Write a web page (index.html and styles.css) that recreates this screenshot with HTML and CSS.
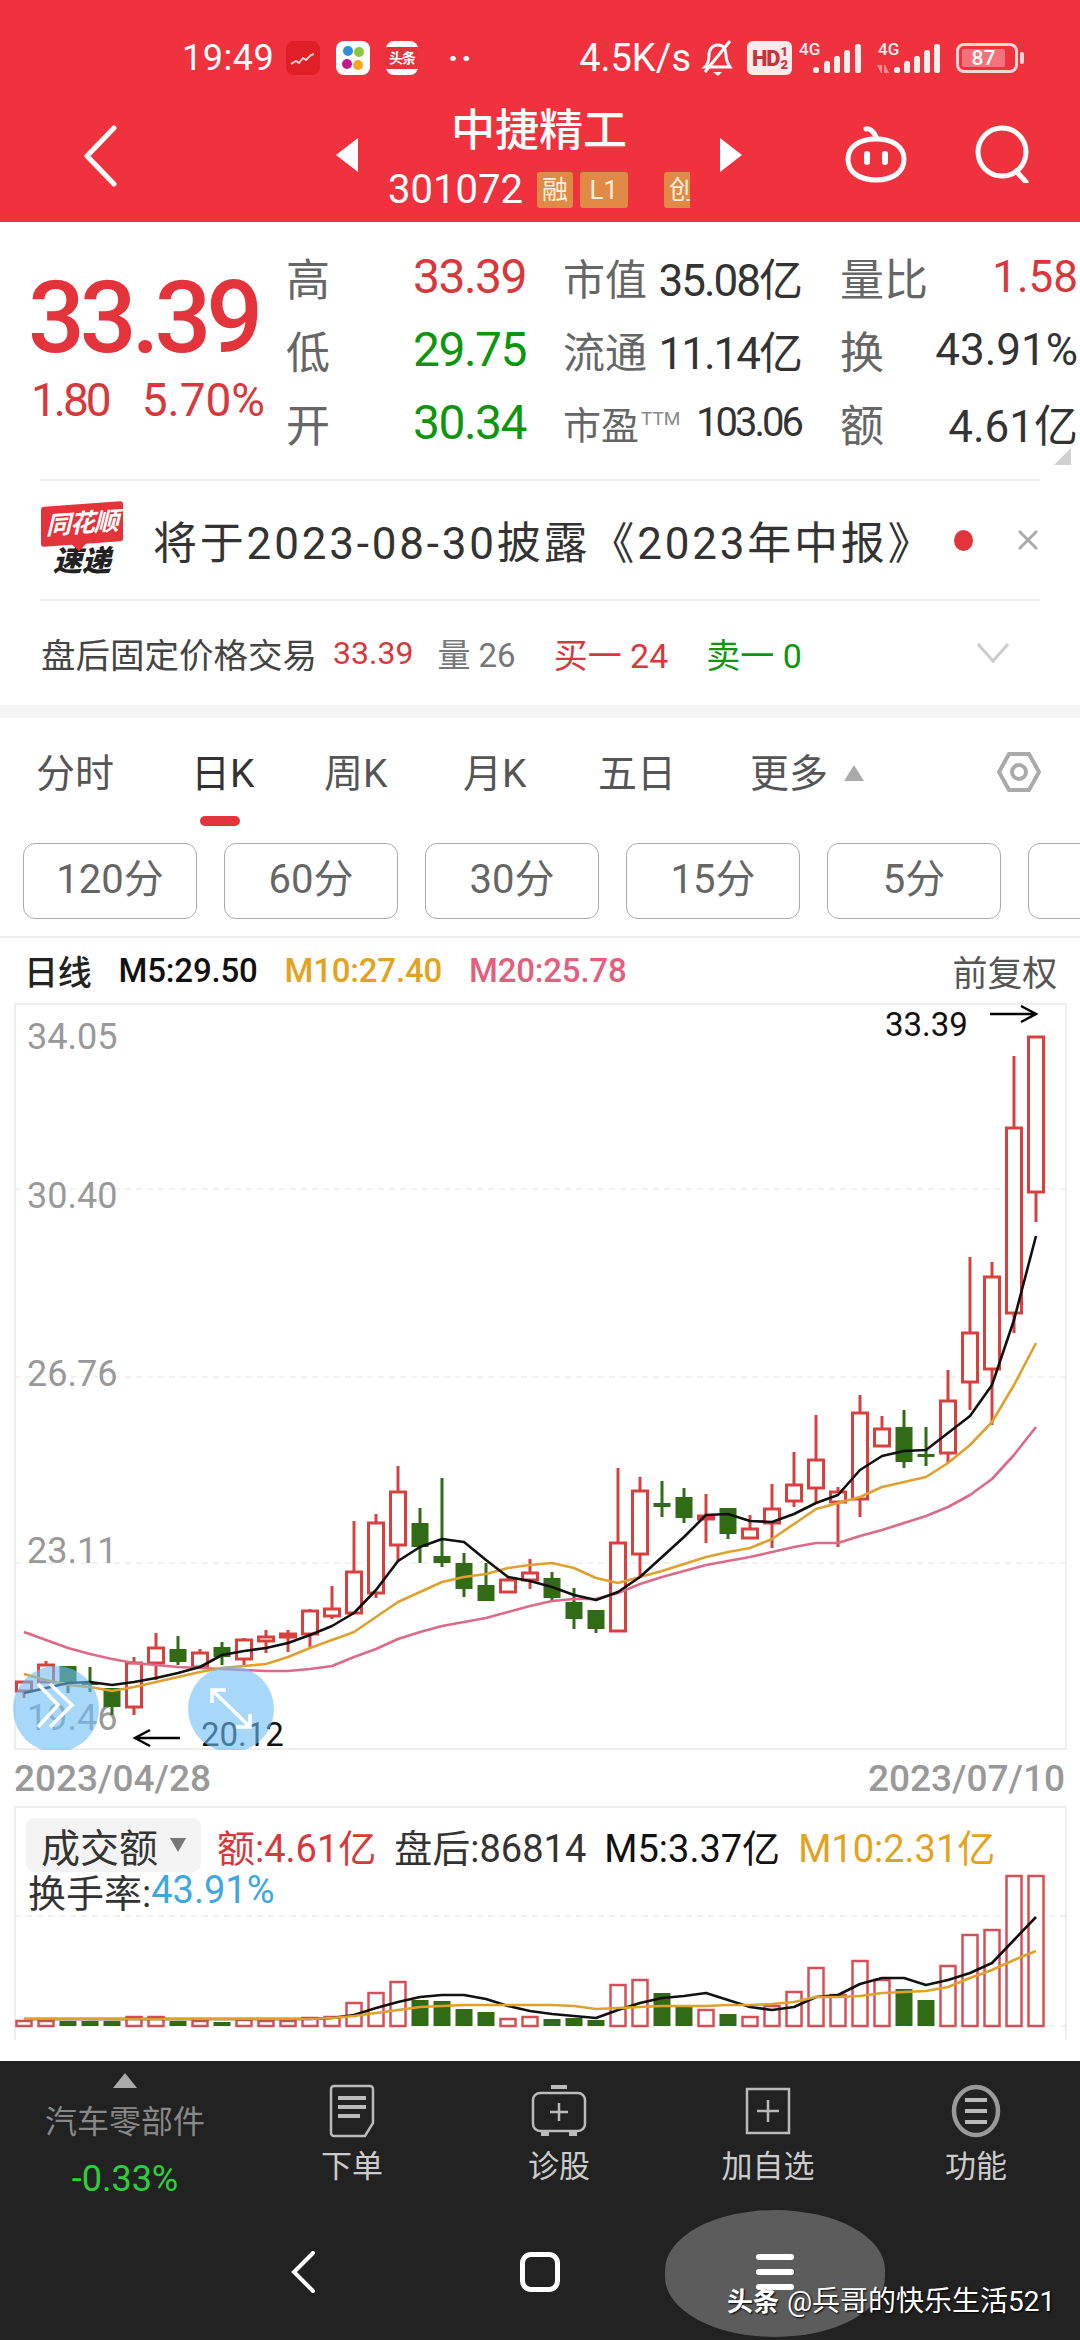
FILE: index.html
```html
<!DOCTYPE html>
<html lang="zh-CN">
<head>
    <meta charset="UTF-8">
    <meta name="viewport" content="width=device-width, initial-scale=1.0">
    <title>中捷精工 301072</title>
    <link rel="stylesheet" href="styles.css">
</head>
<body>

<header class="top">
    <div class="status">
        <span class="clock">19:49</span>
        <span class="app app-red">
            <svg width="34" height="34" viewBox="0 0 34 34"><path d="M5 23l5-3 3 2 4-5 3 2 5-5 3-1" class="squiggle"/></svg>
        </span>
        <span class="app app-white">
            <svg width="34" height="34" viewBox="0 0 34 34">
                <circle cx="12" cy="10" r="5" fill="#2f8fd8"/><circle cx="23" cy="11" r="5" fill="#8cc63f"/>
                <circle cx="11" cy="23" r="5" fill="#c2188f"/><circle cx="22" cy="24" r="5" fill="#f5a623"/>
            </svg>
        </span>
        <span class="app app-news"><span>头条</span></span>
        <span class="dots">··</span>
        <div class="status-right">
            <span class="speed">4.5K/s</span>
            <svg class="bell" width="36" height="38" viewBox="0 0 36 38">
                <path d="M6 28c3-3 4-6 4-12 0-6 4-10 9-10s8 4 8 10c0 6 2 9 4 12z" class="line-w"/>
                <path d="M31 2L6 33" class="line-w"/><path d="M14 33h9l-4 4z" fill="#fff"/>
            </svg>
            <span class="hd">HD<small>1<br>2</small></span>
            <svg class="signal sig-a" width="64" height="34" viewBox="0 0 64 34">
                <text x="1" y="14" class="sig-text">4G</text>
                <rect x="15" y="26" width="6" height="6" rx="2.5"/><rect x="26" y="20" width="6" height="12" rx="2.5"/>
                <rect x="36" y="15" width="6" height="17" rx="2.5"/><rect x="46" y="9" width="6" height="23" rx="2.5"/>
                <rect x="57" y="3" width="6" height="29" rx="2.5"/>
            </svg>
            <svg class="signal" width="64" height="34" viewBox="0 0 64 34">
                <text x="2" y="14" class="sig-text">4G</text>
                <path class="sig-arrows" d="M1 24h5v8h-1zM8 32h5l-4-8h-1z"/>
                <rect x="18" y="26" width="6" height="6" rx="2.5"/><rect x="28" y="20" width="6" height="12" rx="2.5"/>
                <rect x="38" y="15" width="6" height="17" rx="2.5"/><rect x="48" y="9" width="6" height="23" rx="2.5"/>
                <rect x="58" y="3" width="6" height="29" rx="2.5"/>
            </svg>
            <span class="battery"><span class="battery-fill">87</span></span><span class="battery-tip"></span>
        </div>
    </div>
    <div class="title-row">
        <div class="title-back">
            <svg width="36" height="62" viewBox="0 0 36 62"><path d="M32 3L5 31l27 28" class="line-w thick"/></svg>
        </div>
        <div class="title-mid">
            <span class="tri tri-l"></span>
            <div class="title-text">
                <div class="name">中捷精工</div>
                <div class="code">
                    <span>301072</span>
                    <span class="tag tag-rong">融</span>
                    <span class="tag tag-l1">L1</span>
                    <span class="tag tag-cy">创</span>
                </div>
            </div>
            <span class="tri tri-r"></span>
        </div>
        <div class="title-icons">
            <svg width="64" height="58" viewBox="0 0 64 58">
                <path d="M32 12C30 7 26 3 22 4" class="line-w thick"/>
                <path d="M32 14c17 0 28 8 28 20 0 13-11 21-28 21S4 47 4 34c0-12 11-20 28-20z" class="line-w thick"/>
                <rect x="20" y="26" width="6" height="14" rx="3" fill="#fff"/><rect x="38" y="26" width="6" height="14" rx="3" fill="#fff"/>
            </svg>
            <svg width="56" height="58" viewBox="0 0 56 58"><circle cx="27" cy="27" r="24" class="line-w thick"/><path d="M41 46l10 11" class="line-w thick"/></svg>
        </div>
    </div>
</header>

<section class="quote">
    <div class="quote-main">
        <div class="price-col">
            <div class="price">33.39</div>
            <div class="change"><span class="change-abs">1.80</span><span>5.70%</span></div>
        </div>
        <div class="stats">
            <span class="stat-label">高</span><span class="stat-val red">33.39</span>
            <div class="pair"><span class="pair-label">市值</span><span class="pair-val">35.08亿</span></div>
            <div class="pair"><span class="pair-label wide">量比</span><span class="pair-val red loose">1.58</span></div>

            <span class="stat-label">低</span><span class="stat-val green">29.75</span>
            <div class="pair"><span class="pair-label">流通</span><span class="pair-val">11.14亿</span></div>
            <div class="pair"><span class="pair-label wide">换</span><span class="pair-val loose">43.91%</span></div>

            <span class="stat-label">开</span><span class="stat-val green">30.34</span>
            <div class="pair"><span class="pair-label small">市盈<sup>TTM</sup></span><span class="pair-val tight">103.06</span></div>
            <div class="pair"><span class="pair-label wide">额</span><span class="pair-val loose">4.61亿</span></div>
        </div>
        <span class="corner"></span>
    </div>

    <div class="notice">
        <div class="logo">
            <div class="logo-flag">同花顺</div>
            <div class="logo-sub">速递</div>
        </div>
        <div class="notice-text">将于2023-08-30披露《2023年中报》</div>
        <span class="notice-dot"></span>
        <svg class="notice-x" width="22" height="22" viewBox="0 0 22 22"><path d="M2 2l18 18M20 2L2 20"/></svg>
    </div>

    <div class="after">
        <span class="after-name">盘后固定价格交易</span>
        <span class="after-num after-price red">33.39</span>
        <span class="after-grey">量 26</span>
        <span class="after-num red">买一 24</span>
        <span class="after-num green">卖一 0</span>
        <svg class="after-arrow" width="32" height="20" viewBox="0 0 32 20"><path d="M1 1l15 17L31 1"/></svg>
    </div>
</section>

<div class="band"></div>

<nav class="tabs">
    <a class="tab">分时</a>
    <a class="tab active">日K</a>
    <a class="tab">周K</a>
    <a class="tab">月K</a>
    <a class="tab">五日</a>
    <a class="tab">更多<i class="more-tri"></i></a>
    <svg class="hex" width="44" height="42" viewBox="0 0 44 42">
        <path d="M12 3h20l10 18-10 18H12L2 21z"/><circle cx="22" cy="21" r="7"/>
    </svg>
</nav>

<div class="periods">
    <a class="period">120分</a>
    <a class="period">60分</a>
    <a class="period">30分</a>
    <a class="period">15分</a>
    <a class="period">5分</a>
    <a class="period"></a>
</div>

<div class="legend">
    <b class="legend-name">日线</b>
    <span class="c-ma5">M5:29.50</span>
    <span class="c-ma10">M10:27.40</span>
    <span class="c-ma20">M20:25.78</span>
    <span class="legend-right">前复权</span>
</div>

<svg id="kline" class="kline" width="1080" height="747" viewBox="0 1003 1080 747"></svg>

<div class="dates"><span>2023/04/28</span><span>2023/07/10</span></div>

<div class="vol">
    <svg id="volume" class="vol-chart" width="1080" height="255" viewBox="0 1806 1080 255"></svg>
    <div class="vol-line1">
        <span class="vol-select">成交额<i class="select-tri"></i></span>
        <span class="red">额:4.61亿</span>
        <span class="c-dark">盘后:86814</span>
        <span class="c-ma5">M5:3.37亿</span>
        <span class="c-ma10">M10:2.31亿</span>
    </div>
    <div class="vol-line2"><span class="c-dark">换手率:</span><span class="c-blue">43.91%</span></div>
</div>

<footer class="bottom">
    <div class="actions">
        <div class="sector">
            <i class="sector-tri"></i>
            <div class="sector-name">汽车零部件</div>
            <div class="sector-pct">-0.33%</div>
        </div>
        <a class="action">
            <svg width="48" height="54" viewBox="0 0 48 54"><path d="M6 2h36a3 3 0 0 1 3 3v34l-8 13H6a3 3 0 0 1-3-3V5a3 3 0 0 1 3-3z"/><path d="M10 14h28M10 23h28M10 32h22" class="bar"/></svg>
            <span>下单</span>
        </a>
        <a class="action">
            <svg width="56" height="52" viewBox="0 0 56 52">
                <path d="M20 2h16" class="bar"/><rect x="2" y="8" width="52" height="38" rx="7"/>
                <path d="M28 18v18M19 27h18"/><path d="M10 49h8M38 49h8" class="bar"/>
            </svg>
            <span>诊股</span>
        </a>
        <a class="action">
            <svg width="46" height="48" viewBox="0 0 46 48"><rect x="2" y="2" width="42" height="44"/><path d="M23 13v22M12 24h22"/></svg>
            <span>加自选</span>
        </a>
        <a class="action">
            <svg width="50" height="52" viewBox="0 0 50 52"><ellipse cx="25" cy="26" rx="22" ry="24" class="ring"/><path d="M14 15h22M14 26h22M14 37h22" class="bar"/></svg>
            <span>功能</span>
        </a>
    </div>
    <div class="sysbar">
        <svg class="sys-back" width="26" height="42" viewBox="0 0 26 42"><path d="M23 2L4 21l19 19"/></svg>
        <span class="sys-home"></span>
        <div class="sys-pill">
            <i></i><i></i><i></i>
        </div>
        <div class="mark"><b>头条</b> @兵哥的快乐生活521</div>
    </div>
</footer>

<script src="chart.js"></script>
</body>
</html>
```

FILE: styles.css
```css
* {
    box-sizing: border-box;
}
body {
    margin: 0;
    width: 1080px;
    height: 2340px;
    overflow: hidden;
    background: #fff;
    font-family: Roboto, "Noto Sans CJK SC", sans-serif;
    color: #333;
}
.red { color: #d8383c; }
.green { color: #0f960f; }
.c-dark { color: #333; }
.c-blue { color: #3ea6e0; }
.c-ma5 { color: #111; }
.c-ma10 { color: #e3a21f; }
.c-ma20 { color: #e2607e; }
.line-w {
    fill: none;
    stroke: #fff;
    stroke-width: 3;
}
.thick { stroke-width: 5; stroke-linecap: round; stroke-linejoin: round; }

/* red header */
.top {
    height: 222px;
    padding-top: 38px;
    background: #f0323e;
    color: #fff;
}
.status {
    display: flex;
    align-items: center;
    height: 40px;
    padding: 0 56px 0 182px;
}
.clock {
    font-size: 36px;
    width: 104px;
    letter-spacing: 0.5px;
}
.app {
    display: flex;
    align-items: center;
    justify-content: center;
    width: 34px;
    height: 34px;
    border-radius: 8px;
    margin-right: 16px;
    overflow: hidden;
}
.app-red { background: #e01f26; }
.squiggle { fill: none; stroke: #f8d0d0; stroke-width: 2; }
.app-white { background: #fff; }
.app-news {
    width: 32px;
    background: #fff;
    margin-right: 30px;
}
.app-news span {
    width: 100%;
    background: #e8323a;
    color: #fff;
    font-size: 14px;
    font-weight: 700;
    line-height: 22px;
    text-align: center;
    white-space: nowrap;
    letter-spacing: -1px;
}
.dots {
    font-size: 34px;
    font-weight: 700;
    letter-spacing: 3px;
}
.status-right {
    display: flex;
    align-items: center;
    margin-left: auto;
}
.speed {
    font-size: 38px;
    margin-right: 8px;
}
.bell { margin-right: 12px; }
.hd {
    display: flex;
    align-items: center;
    justify-content: center;
    width: 45px;
    height: 34px;
    background: #fdebec;
    border-radius: 6px;
    color: #c9343c;
    font-size: 22px;
    font-weight: 900;
    letter-spacing: -1px;
    margin-right: 6px;
}
.hd small {
    font-size: 13px;
    line-height: 13px;
    text-align: center;
    margin-left: 1px;
}
.signal {
    fill: #fdeeee;
    margin-right: 16px;
    overflow: visible;
}
.sig-a { margin-right: 14px; }
.sig-text {
    font-size: 17px;
    font-weight: 500;
    fill: #fdeeee;
}
.sig-arrows { fill: #f98a90; }
.battery {
    display: flex;
    width: 62px;
    height: 30px;
    padding: 3px;
    border: 3px solid #fbd6d8;
    border-radius: 8px;
}
.battery-fill {
    width: 43px;
    background: #f5727c;
    border-radius: 2px;
    font-size: 21px;
    font-weight: 500;
    line-height: 18px;
    text-align: center;
    color: #fff;
}
.battery-tip {
    width: 4px;
    height: 12px;
    margin-left: 2px;
    background: #fbd6d8;
    border-radius: 2px;
}
.title-row {
    display: grid;
    grid-template-columns: 336px 406px 338px;
    height: 144px;
}
.title-back {
    padding: 47px 0 0 82px;
}
.title-mid {
    display: flex;
    align-items: flex-start;
    justify-content: space-between;
}
.tri {
    width: 0;
    height: 0;
    margin-top: 60px;
    border-top: 17px solid transparent;
    border-bottom: 17px solid transparent;
}
.tri-l { border-right: 22px solid #fff; }
.tri-r { border-left: 22px solid #fff; }
.title-text {
    width: 302px;
    overflow: hidden;
}
.name {
    margin-top: 28px;
    font-size: 44px;
    font-weight: 500;
    line-height: 50px;
    text-align: center;
}
.code {
    display: flex;
    align-items: center;
    margin-top: 10px;
    font-size: 40px;
    line-height: 47px;
    white-space: nowrap;
}
.tag {
    flex: none;
    height: 36px;
    background: #e08a45;
    border-radius: 3px;
    font-size: 26px;
    line-height: 36px;
    text-align: center;
    color: #fdf0dc;
}
.tag-rong { width: 36px; margin-left: 14px; }
.tag-l1 { width: 48px; margin-left: 7px; }
.tag-cy { width: 36px; margin-left: 36px; }
.title-icons {
    display: flex;
    align-items: flex-start;
    gap: 67px;
    padding: 47px 0 0 102px;
}

/* quote block */
.quote {
    height: 483px;
}
.quote-main {
    display: flex;
    position: relative;
    height: 257px;
    margin: 0 0 0 28px;
}
.price-col {
    width: 258px;
    padding-top: 38px;
}
.price {
    font-size: 100px;
    font-weight: 500;
    line-height: 116px;
    letter-spacing: -5px;
    color: #e2343a;
}
.change {
    display: flex;
    gap: 33px;
    margin-top: -2px;
    padding-left: 3px;
    font-size: 46px;
    line-height: 52px;
    color: #d8383c;
}
.change-abs {
    letter-spacing: -3px;
}
.stats {
    display: grid;
    grid-template-columns: 127px 150px 277px 240px;
    grid-auto-rows: 73px;
    align-items: center;
    padding-top: 18px;
    height: 257px;
}
.stat-label {
    font-size: 44px;
    color: #666;
}
.stat-val {
    font-size: 48px;
    letter-spacing: -1.5px;
}
.pair {
    display: flex;
    align-items: center;
    justify-content: space-between;
    width: 238px;
    white-space: nowrap;
}
.pair-label {
    font-size: 42px;
    color: #666;
}
.pair-label.wide { font-size: 44px; }
.pair-label.small { font-size: 38px; }
.pair-label sup {
    font-size: 19px;
    vertical-align: 14px;
    line-height: 0;
    color: #888;
    margin-left: 2px;
}
.pair-val {
    font-size: 44px;
    letter-spacing: -2px;
    color: #333;
}
.pair-val.red { color: #d8383c; }
.pair-val.loose { letter-spacing: 0; }
.pair-val.tight { font-size: 40px; letter-spacing: -3px; }
.corner {
    position: absolute;
    right: 9px;
    bottom: 14px;
    width: 0;
    height: 0;
    border-left: 17px solid transparent;
    border-bottom: 17px solid #d0d0d0;
}
.notice {
    display: flex;
    align-items: center;
    height: 122px;
    margin: 0 40px;
    border-top: 2px solid #f0f0f0;
    border-bottom: 2px solid #f0f0f0;
}
.logo {
    width: 82px;
    margin-left: 1px;
    text-align: center;
}
.logo-flag {
    position: relative;
    height: 40px;
    background: #e2343a;
    border-radius: 3px;
    color: #fff;
    font-size: 25px;
    font-weight: 700;
    font-style: italic;
    line-height: 40px;
    white-space: nowrap;
    letter-spacing: -1px;
    transform: skewY(-4deg);
}
.logo-flag::after {
    content: "";
    position: absolute;
    left: 30px;
    top: 39px;
    border-left: 8px solid transparent;
    border-right: 8px solid transparent;
    border-top: 8px solid #e2343a;
}
.logo-sub {
    margin-top: 2px;
    color: #222;
    font-size: 29px;
    font-weight: 900;
    font-style: italic;
    line-height: 30px;
}
.notice-text {
    margin-left: 30px;
    font-size: 44px;
    letter-spacing: 2.8px;
    white-space: nowrap;
    color: #333;
}
.notice-dot {
    position: absolute;
    left: 954px;
    width: 19px;
    height: 21px;
    border-radius: 50%;
    background: #e2343a;
}
.notice-x {
    position: absolute;
    left: 1017px;
    fill: none;
    stroke: #aaa;
    stroke-width: 3;
}
.after {
    display: flex;
    align-items: center;
    position: relative;
    height: 104px;
    padding-left: 41px;
    white-space: nowrap;
}
.after-name { color: #444; margin-right: 16px; font-size: 34.5px; }
.after-num { margin-right: 38px; font-size: 34px; }
.after-price { font-size: 32px; margin-right: 24px; }
.after-grey { color: #777; margin-right: 38px; font-size: 33px; }
.after-arrow {
    position: absolute;
    left: 977px;
    fill: none;
    stroke: #ccc;
    stroke-width: 3;
}
.band {
    height: 13px;
    background: #f5f5f5;
}

/* period tabs */
.tabs {
    position: relative;
    display: grid;
    grid-template-columns: 155px 133px 139px 135px 152px 245px 1fr;
    align-items: center;
    height: 112px;
    padding: 0 0 0 36px;
}
.tab {
    font-size: 39px;
    line-height: 84px;
    color: #555;
    white-space: nowrap;
}
.tab.active { color: #333; }
.tab.active::after {
    content: "";
    position: absolute;
    left: 200px;
    top: 98px;
    width: 40px;
    height: 10px;
    border-radius: 5px;
    background: #e2343a;
}
.more-tri {
    display: inline-block;
    width: 0;
    height: 0;
    margin-left: 16px;
    border-left: 10px solid transparent;
    border-right: 10px solid transparent;
    border-bottom: 16px solid #aaa;
    vertical-align: 6px;
}
.hex {
    fill: none;
    stroke: #aaa;
    stroke-width: 4;
    margin: -4px 0 0 2px;
    justify-self: start;
}
.periods {
    display: flex;
    gap: 27px;
    height: 108px;
    padding: 13px 0 0 23px;
    overflow: hidden;
    border-bottom: 2px solid #eee;
}
.period {
    flex: none;
    width: 174px;
    height: 76px;
    border: 1px solid #aaa;
    border-radius: 12px;
    font-size: 40px;
    line-height: 72px;
    text-align: center;
    color: #666;
}
.legend {
    display: flex;
    align-items: center;
    height: 65px;
    padding: 0 23px 0 24px;
    font-size: 33px;
    font-weight: 500;
    white-space: nowrap;
    gap: 27px;
    letter-spacing: -0.2px;
}
.legend-name {
    font-size: 34px;
    font-weight: 500;
    color: #222;
}
.legend-right {
    margin-left: auto;
    font-size: 35px;
    font-weight: 400;
    color: #555;
}

/* charts */
.kline, .vol-chart {
    display: block;
}
.frame {
    fill: none;
    stroke: #eee;
    stroke-width: 2;
}
.grid {
    stroke: #e4e4e4;
    stroke-width: 1;
    stroke-dasharray: 6 5;
}
.axis {
    font-size: 36px;
    fill: #999;
}
.tick {
    font-size: 33px;
    fill: #111;
}
.arrow {
    fill: none;
    stroke: #000;
    stroke-width: 2.5;
}
.up {
    fill: #fff;
    stroke: #d8403f;
    stroke-width: 3;
}
.wick-up {
    stroke: #d8403f;
    stroke-width: 3;
}
.down {
    fill: #316b16;
    stroke: none;
}
.wick-down {
    stroke: #316b16;
    stroke-width: 3;
}
.ma {
    fill: none;
    stroke-width: 2.6;
    stroke-linejoin: round;
}
.ma5 { stroke: #111; }
.ma10 { stroke: #e0a12c; }
.ma20 { stroke: #dc6a88; }
.bubble { fill: rgba(110, 190, 245, 0.6); }
.bubble-icon {
    fill: none;
    stroke: #fff;
    stroke-width: 3.5;
}
.dates {
    display: flex;
    justify-content: space-between;
    align-items: center;
    height: 56px;
    padding: 0 15px 0 14px;
    font-size: 37px;
    font-weight: 500;
    color: #999;
}
.vol {
    position: relative;
    height: 255px;
    overflow: hidden;
}
.vol-chart {
    position: absolute;
    left: 0;
    top: 0;
}
.vol-bar-up {
    fill: #fff;
    stroke: #d55056;
    stroke-width: 2.5;
}
.vol-line1, .vol-line2 {
    position: relative;
    display: flex;
    align-items: center;
    font-size: 38px;
    white-space: nowrap;
}
.vol-line1 {
    gap: 18px;
    height: 54px;
    margin: 12px 0 0 26px;
}
.vol-select {
    display: flex;
    align-items: center;
    width: 175px;
    height: 54px;
    padding-left: 15px;
    margin-right: -2px;
    background: #f3f3f3;
    border-radius: 8px;
    font-size: 39px;
    color: #333;
}
.select-tri {
    width: 0;
    height: 0;
    margin-left: 12px;
    border-left: 8px solid transparent;
    border-right: 8px solid transparent;
    border-top: 14px solid #777;
}
.vol-line2 {
    height: 36px;
    margin-left: 28px;
}

/* dark footer */
.bottom {
    height: 279px;
    background: #222;
}
.actions {
    display: grid;
    grid-template-columns: 250px 204px 210px 208px 208px;
    height: 149px;
}
.sector {
    display: flex;
    flex-direction: column;
    align-items: center;
}
.sector-tri {
    width: 0;
    height: 0;
    margin-top: 12px;
    border-left: 12px solid transparent;
    border-right: 12px solid transparent;
    border-bottom: 15px solid #aaa;
}
.sector-name {
    margin-top: 11px;
    font-size: 32px;
    line-height: 46px;
    color: #888;
}
.sector-pct {
    margin-top: 14px;
    font-size: 36px;
    line-height: 40px;
    color: #2bd03a;
}
.action {
    display: flex;
    flex-direction: column;
    align-items: center;
    justify-content: flex-start;
    padding-top: 23px;
    font-size: 31px;
    color: #ccc;
}
.action svg {
    height: 54px;
    fill: none;
    stroke: #bbb;
    stroke-width: 2.5;
}
.action span {
    margin-top: 7px;
    line-height: 44px;
}
.action .bar {
    stroke-width: 4;
}
.action .ring {
    stroke-width: 4.5;
    stroke: #999;
}
.sysbar {
    position: relative;
    height: 130px;
}
.sys-back {
    position: absolute;
    left: 290px;
    top: 41px;
    fill: none;
    stroke: #fff;
    stroke-width: 4;
    stroke-linecap: round;
}
.sys-home {
    position: absolute;
    left: 520px;
    top: 42px;
    width: 40px;
    height: 40px;
    border: 5px solid #fff;
    border-radius: 11px;
}
.sys-pill {
    position: absolute;
    left: 665px;
    top: 0;
    width: 220px;
    height: 127px;
    padding-top: 44px;
    background: #5c5c5c;
    border-radius: 110px / 60px;
}
.sys-pill i {
    display: block;
    width: 38px;
    height: 6px;
    margin: 0 auto 9px;
    background: #fff;
    border-radius: 3px;
}
.mark {
    position: absolute;
    left: 727px;
    top: 72px;
    font-size: 28px;
    line-height: 40px;
    color: #fff;
    white-space: nowrap;
    text-shadow: 1px 1px 2px #000;
}
.mark b {
    font-size: 26px;
    margin-right: 1px;
}
```

FILE: chart.js
```js
// x position of candle / bar number i
function xAt(i) {
    return 24 + 22 * i;
}

// [high, body top, body bottom, low, up?] in page pixels
let candles = [
    [1682,1682,1691,1698,1],[1661,1665,1682,1682,1],[1666,1666,1682,1693,0],[1667,1682,1684,1692,0],
    [1688,1688,1707,1715,0],[1657,1663,1707,1715,1],[1633,1648,1663,1680,1],[1636,1649,1662,1665,0],
    [1649,1653,1667,1667,1],[1642,1647,1657,1665,0],[1638,1640,1659,1666,1],[1630,1637,1641,1653,1],
    [1630,1634,1637,1652,1],[1609,1611,1634,1647,1],[1586,1609,1616,1619,1],[1521,1572,1613,1613,1],
    [1514,1523,1593,1598,1],[1466,1492,1545,1562,1],[1508,1523,1547,1563,0],[1478,1556,1563,1567,0],
    [1553,1563,1589,1597,0],[1563,1585,1601,1601,0],[1577,1580,1592,1592,1],[1559,1573,1580,1589,1],
    [1572,1578,1598,1600,0],[1588,1602,1619,1629,0],[1610,1610,1629,1633,0],[1468,1543,1631,1631,1],
    [1477,1491,1554,1577,1],[1481,1503,1507,1517,0],[1488,1497,1518,1523,0],[1494,1516,1519,1543,1],
    [1508,1508,1534,1539,0],[1515,1529,1538,1539,1],[1484,1509,1523,1548,1],[1452,1485,1501,1507,1],
    [1415,1460,1488,1503,1],[1487,1492,1502,1547,1],[1395,1413,1499,1517,1],[1416,1429,1446,1446,1],
    [1410,1427,1462,1468,0],[1427,1454,1456,1466,0],[1370,1401,1453,1463,1],[1257,1333,1382,1410,1],
    [1262,1277,1369,1425,1],[1056,1128,1313,1333,1],[1037,1037,1192,1222,1]
];

let ma5 = [1693,1688,1683,1682,1685,1682,1678,1673,1667,1655,1651,1648,1643,1635,1626,1613,1590,1561,1547,1539,1542,1560,1577,1581,
    1587,1595,1600,1592,1577,1557,1537,1515,1514,1521,1522,1514,1503,1495,1470,1456,1451,1450,1433,1416,1385,1320,1236];
let ma10 = [1674,1680,1685,1687,1691,1687,1682,1677,1672,1668,1666,1664,1657,1648,1640,1632,1617,1602,1592,1582,1577,1574,1568,1565,
    1563,1568,1578,1583,1577,1571,1564,1557,1552,1548,1539,1524,1509,1503,1497,1487,1482,1477,1463,1445,1422,1385,1343];
let ma20 = [1632,1640,1648,1654,1659,1663,1665,1667,1668,1669,1670,1671,1671,1669,1666,1657,1649,1639,1632,1626,1622,1618,1612,1606,
    1601,1599,1599,1593,1584,1577,1571,1565,1561,1557,1552,1547,1543,1543,1536,1530,1523,1516,1507,1495,1479,1455,1427];

// volume bars and averages, height above the baseline
let volBase = 2026;
let volumes = [5,5,5,5,5,9,9,5,5,4,6,5,5,8,9,23,33,44,26,25,17,14,7,9,7,8,6,41,46,33,19,16,12,9,20,34,58,31,65,46,37,26,60,91,96,150,150];
let volMa5 = [7,7,7,7,7,7,7,7,7,7,7,7,7,7,8,11,18,24,29,31,31,27,20,15,12,10,8,16,23,28,30,33,26,19,16,19,29,31,42,48,48,41,46,53,63,86,109];
let volMa10 = [7,7,7,7,7,7,7,7,7,7,7,7,7,7,8,10,13,16,19,20,21,21,21,21,21,20,17,18,19,20,20,20,21,21,22,24,29,29,30,33,34,35,39,48,56,66,75];

function polyline(ys, cls) {
    let pts = ys.map((y, i) => xAt(i) + ',' + y).join(' ');
    return `<polyline class="ma ${cls}" points="${pts}"/>`;
}

function candleSvg(c, i) {
    let x = xAt(i);
    let [high, top, bottom, low, up] = c;
    if (up) {
        return `<path class="wick-up" d="M${x} ${high}V${top}M${x} ${bottom}V${low}"/>` +
            `<rect class="up" x="${x - 7.5}" y="${top}" width="15" height="${bottom - top}"/>`;
    }
    return `<path class="wick-down" d="M${x} ${high}V${low}"/>` +
        `<rect class="down" x="${x - 8.5}" y="${top}" width="17" height="${Math.max(bottom - top, 3)}"/>`;
}

function drawKline() {
    let html = '<rect class="frame" x="15" y="1004" width="1051" height="745"/>';
    [1189, 1377, 1563].forEach(y => {
        html += `<line class="grid" x1="15" x2="1066" y1="${y}" y2="${y}"/>`;
    });
    [['34.05', 1049], ['30.40', 1208], ['26.76', 1386], ['23.11', 1563], ['19.46', 1730]].forEach(l => {
        html += `<text class="axis" x="27" y="${l[1]}">${l[0]}</text>`;
    });
    html += candles.map(candleSvg).join('');
    html += polyline(ma20, 'ma20') + polyline(ma10, 'ma10') + polyline(ma5, 'ma5');

    html += '<text class="tick" x="885" y="1036">33.39</text>';
    html += '<path class="arrow" d="M990 1014H1036M1021 1006l15 8-15 8"/>';
    html += '<text class="tick" x="201" y="1746">20.12</text>';
    html += '<path class="arrow" d="M180 1738H135M150 1730l-15 8 15 8"/>';

    html += '<circle class="bubble" cx="56" cy="1709" r="43"/>';
    html += '<path class="bubble-icon" d="M38 1684l20 21-20 22M50 1684l22 21-22 22"/>';
    html += '<circle class="bubble" cx="231" cy="1709" r="43"/>';
    html += '<path class="bubble-icon" d="M212 1690l38 37M212 1703v-13h14M250 1714v13h-14"/>';
    document.getElementById('kline').innerHTML = html;
}

function drawVolume() {
    let html = '<path class="frame" d="M15 2040V1807H1066V2040"/>';
    html += '<line class="grid" x1="15" x2="1066" y1="1916" y2="1916"/>';
    html += `<line class="grid" x1="15" x2="1066" y1="${volBase}" y2="${volBase}"/>`;
    volumes.forEach((h, i) => {
        if (candles[i][4]) {
            html += `<rect class="vol-bar-up" x="${xAt(i) - 7.5}" y="${volBase - h}" width="15" height="${h}"/>`;
        } else {
            html += `<rect class="down" x="${xAt(i) - 8.5}" y="${volBase - h}" width="17" height="${h}"/>`;
        }
    });
    html += polyline(volMa5.map(h => volBase - h), 'ma5');
    html += polyline(volMa10.map(h => volBase - h), 'ma10');
    document.getElementById('volume').innerHTML = html;
}

drawKline();
drawVolume();
```
